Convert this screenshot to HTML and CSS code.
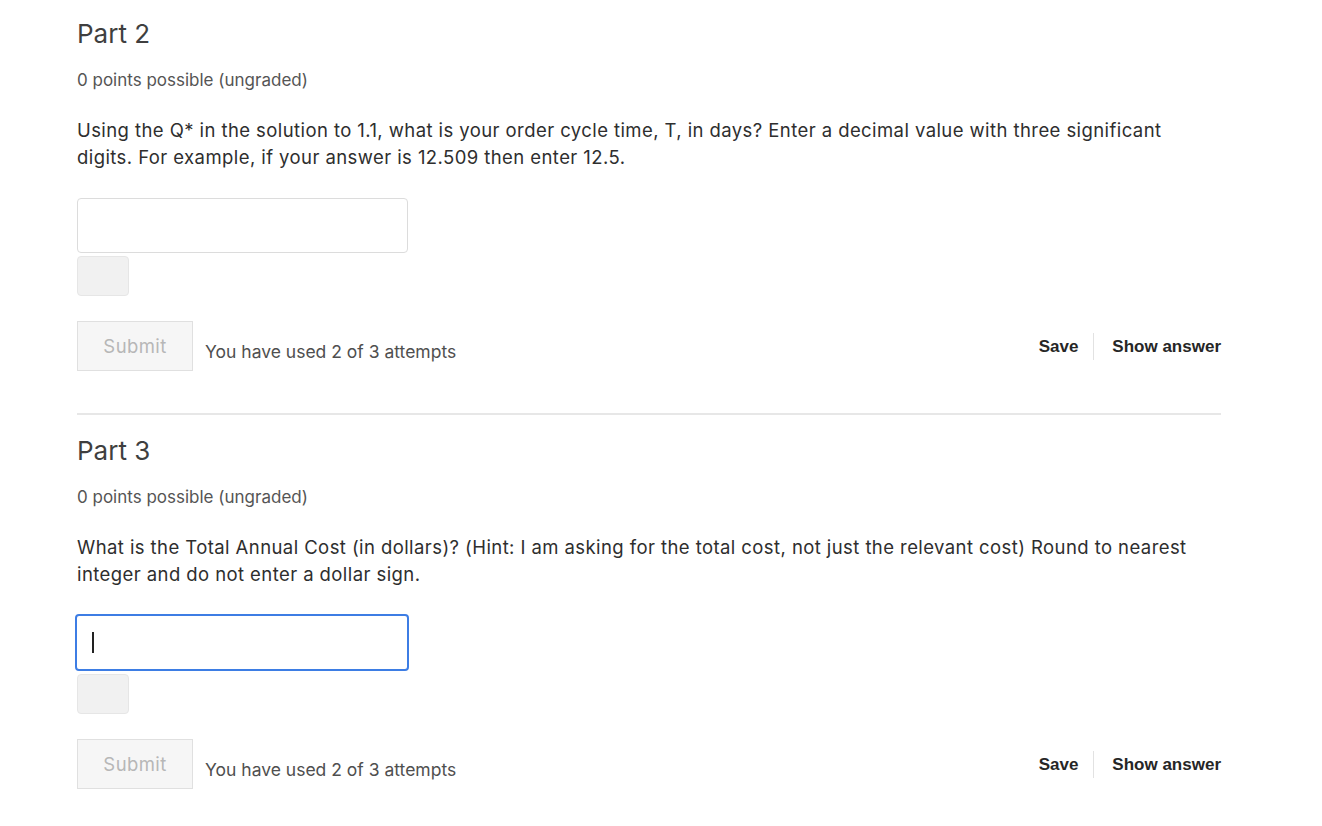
FILE: index.html
```html
<!DOCTYPE html>
<html>
<head>
<meta charset="utf-8">
<link rel="stylesheet" href="styles.css">
</head>
<body>
<div class="page">
  <section class="problem">
    <h3 class="title">Part 2</h3>
    <div class="points">0 points possible (ungraded)</div>
    <p class="question">Using the Q* in the solution to 1.1, what is your order cycle time, T, in days? Enter a decimal value with three significant digits. For example, if your answer is 12.509 then enter 12.5.</p>
    <div class="answer">
      <input class="field" type="text">
      <div class="status"></div>
    </div>
    <div class="actions">
      <div class="left">
        <button class="submit">Submit</button>
        <span class="attempts">You have used 2 of 3 attempts</span>
      </div>
      <div class="right">
        <button class="link">Save</button>
        <span class="sep"></span>
        <button class="link">Show answer</button>
      </div>
    </div>
  </section>
  <hr class="divider">
  <section class="problem">
    <h3 class="title">Part 3</h3>
    <div class="points">0 points possible (ungraded)</div>
    <p class="question">What is the Total Annual Cost (in dollars)? (Hint: I am asking for the total cost, not just the relevant cost) Round to nearest integer and do not enter a dollar sign.</p>
    <div class="answer">
      <div class="field focused"><span class="caret"></span></div>
      <div class="status"></div>
    </div>
    <div class="actions">
      <div class="left">
        <button class="submit">Submit</button>
        <span class="attempts">You have used 2 of 3 attempts</span>
      </div>
      <div class="right">
        <button class="link">Save</button>
        <span class="sep"></span>
        <button class="link">Show answer</button>
      </div>
    </div>
  </section>
</div>
</body>
</html>
```
FILE: styles.css
```css
* { box-sizing: border-box; }
html, body { margin: 0; padding: 0; background: #fff; }
body { font-family: Inter, "Noto Sans", sans-serif; color: #313131; }
.page { width: 1144px; margin-left: 77px; padding-top: 18px; }
.problem { display: flex; flex-direction: column; }
.title { margin: 0; font-size: 26px; font-weight: 400; line-height: 32px; color: #3f3f3f; }
.points { margin-top: 18px; font-size: 17px; line-height: 24px; color: #555555; }
.question { margin: 25px 0 0; max-width: 1130px; font-size: 18.5px; line-height: 27px; letter-spacing: 0.42px; color: #2e2e2e; }
.answer { margin-top: 27px; display: flex; flex-direction: column; gap: 3px; }
.field { width: 331px; height: 55px; border: 1px solid #dcdcdc; border-radius: 4px; background: #fff; font: inherit; padding: 0 14px; outline: none; display: block; }
.field.focused { width: 334px; height: 57px; border: 2px solid #3d7de4; margin-left: -2px; margin-top: -1px; display: flex; align-items: center; padding: 0 15px; }
.caret { width: 1.5px; height: 21px; background: #222; }
.status { width: 52px; height: 40px; background: #f1f1f1; border: 1px solid #e6e6e6; border-radius: 4px; }
.actions { margin-top: 25px; display: flex; justify-content: space-between; align-items: center; }
.left { display: flex; align-items: flex-end; gap: 12px; }
.submit { width: 116px; height: 50px; background: #f6f6f6; border: 1px solid #e0e0e0; font-family: Inter, "Noto Sans", sans-serif; font-size: 18.5px; letter-spacing: 0.4px; color: #b7b7b7; padding: 0; border-radius: 0; }
.attempts { font-size: 17.5px; color: #4f4f4f; line-height: 20px; margin-bottom: 9px; }
.right { display: flex; align-items: center; padding-top: 1px; }
.link { background: none; border: none; padding: 0; font-family: "Liberation Sans", Arial, sans-serif; font-weight: 700; font-size: 17px; color: #262626; }
.sep { width: 1px; height: 27px; background: #e2e2e2; margin: 0 18px 0 15px; }
.divider { border: none; height: 2px; background: #e7e7e7; margin: 42px 0 20px; }
```
